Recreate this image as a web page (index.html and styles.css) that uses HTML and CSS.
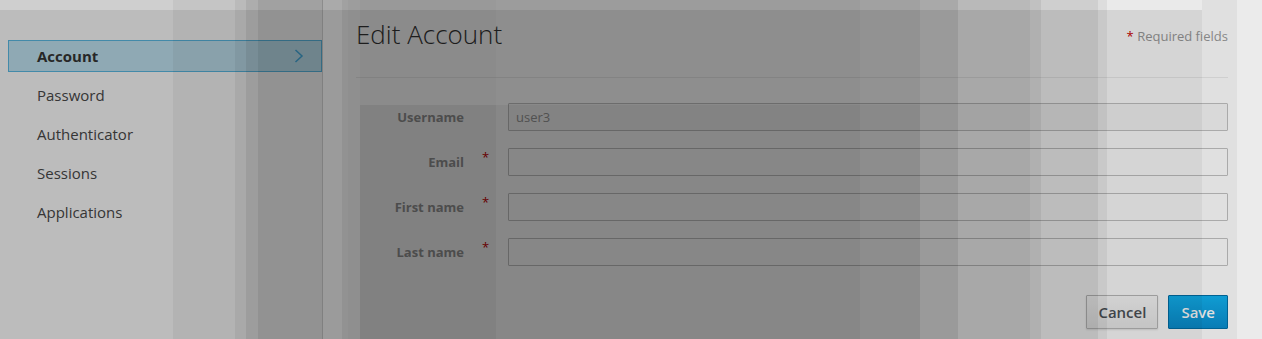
FILE: index.html
```
<!DOCTYPE html>
<html lang="en">
<head>
<meta charset="utf-8">
<title>Edit Account</title>
<link rel="stylesheet" href="styles.css">
</head>
<body>
<div class="page">
  <aside class="sidebar">
    <ul class="nav">
      <li><a class="nav-link active" href="#">Account
        <svg class="chev" width="10" height="14" viewBox="0 0 10 14"><polyline points="1.5,1 8,7 1.5,13" fill="none" stroke="#45b0e4" stroke-width="1.5"/></svg></a></li>
      <li><a class="nav-link" href="#">Password</a></li>
      <li><a class="nav-link" href="#">Authenticator</a></li>
      <li><a class="nav-link" href="#">Sessions</a></li>
      <li><a class="nav-link" href="#">Applications</a></li>
    </ul>
  </aside>
  <main class="content">
    <div class="head">
      <h2 class="title">Edit Account</h2>
      <span class="subtitle"><span class="req">*</span> Required fields</span>
    </div>
    <hr class="rule">
    <form class="form">
      <div class="row">
        <label class="label" for="username">Username</label>
        <span class="star"></span>
        <input class="input input-disabled" id="username" value="user3" readonly>
      </div>
      <div class="row">
        <label class="label" for="email">Email</label>
        <span class="star">*</span>
        <input class="input" id="email">
      </div>
      <div class="row">
        <label class="label" for="first">First name</label>
        <span class="star">*</span>
        <input class="input" id="first">
      </div>
      <div class="row">
        <label class="label" for="last">Last name</label>
        <span class="star">*</span>
        <input class="input" id="last">
      </div>
      <div class="actions">
        <button type="button" class="btn btn-default">Cancel</button>
        <button type="button" class="btn btn-primary">Save</button>
      </div>
    </form>
  </main>
</div>
<div class="shade" aria-hidden="true"></div>
</body>
</html>
```
FILE: styles.css
```
html, body {
  margin: 0;
  padding: 0;
  background: #fff;
  font-family: "Open Sans", "Noto Sans", sans-serif;
}

.page {
  display: flex;
  min-height: 339px;
}

.sidebar {
  width: 322px;
  border-right: 1px solid #d3d3d3;
  padding-top: 40px;
  box-sizing: content-box;
}

.nav {
  list-style: none;
  margin: 0;
  padding: 0;
}

.nav li {
  margin-bottom: 7px;
}

.nav-link {
  display: flex;
  align-items: center;
  justify-content: space-between;
  margin-left: 8px;
  padding: 0 17px 0 28px;
  height: 30px;
  border: 1px solid transparent;
  font-size: 15px;
  line-height: 30px;
  color: #4a4a4a;
  text-decoration: none;
}

.nav-link.active {
  background: #c3e6f4;
  border-color: #5bbbe5;
  color: #363636;
  font-weight: 700;
}

.chev {
  display: block;
}

.content {
  flex: 1;
  padding: 16px 34px 0 33px;
}

.head {
  display: flex;
  justify-content: space-between;
  align-items: flex-start;
}

.title {
  margin: 0;
  font-size: 26px;
  line-height: 36px;
  font-weight: 300;
  color: #363636;
}

.subtitle {
  margin-top: 11px;
  font-size: 13px;
  line-height: 18px;
  color: #9a9a9a;
}

.req {
  color: #c00;
}

.rule {
  margin: 25px 0 0;
  height: 0;
  border: 0;
  border-top: 1px solid #ececec;
}

.form {
  margin-top: 25px;
}

.row {
  display: grid;
  grid-template-columns: 108px 44px 1fr;
  align-items: center;
  height: 28px;
  margin-bottom: 17px;
}

.label {
  text-align: right;
  font-size: 13px;
  font-weight: 700;
  color: #979797;
}

.star {
  align-self: start;
  padding-left: 18px;
  font-size: 13px;
  line-height: 18px;
  color: #c00;
}

.input {
  box-sizing: border-box;
  height: 28px;
  width: 100%;
  margin: 0;
  padding: 0 7px;
  border: 1px solid #c2c2c2;
  border-radius: 1px;
  background: #fff;
  font-family: "Open Sans", "Noto Sans", sans-serif;
  font-size: 13px;
  color: #999;
  outline: none;
}

.input-disabled {
  background: #f7f7f7;
}

.actions {
  display: flex;
  justify-content: flex-end;
  gap: 10px;
  margin-top: 29px;
}

.btn {
  box-sizing: border-box;
  height: 34px;
  padding: 0 11px;
  border-radius: 1px;
  font-family: "Open Sans", "Noto Sans", sans-serif;
  font-size: 15px;
  font-weight: 600;
  cursor: pointer;
}

.btn-default {
  background: linear-gradient(#fcfcfc, #ececec);
  border: 1px solid #bbb;
  color: #4d5258;
  box-shadow: 0 1px 2px rgba(0, 0, 0, 0.12);
}

.btn-primary {
  background: linear-gradient(#12b2f0, #0a8ecf);
  border: 1px solid #0070a8;
  color: #fff;
  padding: 0 12px;
}

.shade {
  position: fixed;
  inset: 0;
  pointer-events: none;
  background:
    linear-gradient(to right,
      rgba(0,0,0,.07) 0 136px,
      rgba(0,0,0,.05) 136px 500px,
      rgba(0,0,0,.035) 500px 560px) 360px 105px / 560px 234px no-repeat,
    linear-gradient(rgba(0,0,0,.09), rgba(0,0,0,.09)) 0 10px / 1202px 329px no-repeat,
    linear-gradient(to right,
      rgba(0,0,0,.19) 0 173px,
      rgba(0,0,0,.229) 173px 235px,
      rgba(0,0,0,.271) 235px 246px,
      rgba(0,0,0,.323) 246px 258px,
      rgba(0,0,0,.367) 258px 322px,
      rgba(0,0,0,.332) 322px 342px,
      rgba(0,0,0,.367) 342px 348px,
      rgba(0,0,0,.385) 348px 360px,
      rgba(0,0,0,.401) 360px 496px,
      rgba(0,0,0,.388) 496px 860px,
      rgba(0,0,0,.37) 860px 920px,
      rgba(0,0,0,.336) 920px 958px,
      rgba(0,0,0,.276) 958px 1030px,
      rgba(0,0,0,.242) 1030px 1041px,
      rgba(0,0,0,.19) 1041px 1098px,
      rgba(0,0,0,.132) 1098px 1107px,
      rgba(0,0,0,.082) 1107px 1202px,
      rgba(0,0,0,.122) 1202px 1237px,
      rgba(0,0,0,.08) 1237px) 0 0 / 100% 100% no-repeat;
}
```
